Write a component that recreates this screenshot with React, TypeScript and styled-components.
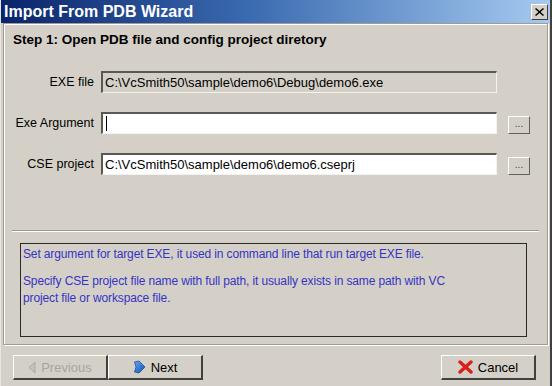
import styled, { createGlobalStyle } from "styled-components";

const GlobalStyle = createGlobalStyle`
    html, body {
        margin: 0;
        padding: 0;
        background: #d4d0c8;
    }
    body {
        font-family: "Liberation Sans", Arial, sans-serif;
    }
`;

const fields = [
    { label: "EXE file", value: "C:\\VcSmith50\\sample\\demo6\\Debug\\demo6.exe", disabled: true, browse: false, focused: false },
    { label: "Exe Argument", value: "", disabled: false, browse: true, focused: true },
    { label: "CSE project", value: "C:\\VcSmith50\\sample\\demo6\\demo6.cseprj", disabled: false, browse: true, focused: false },
];

export default function App() {
    return (
        <>
            <GlobalStyle />
            <Window>
                <TitleBar>
                    <span>Import From PDB Wizard</span>
                    <CloseButton>
                        <svg width="9" height="8" viewBox="0 0 9 8">
                            <path d="M1 0 L4.5 3 L8 0 L9 1 L5.5 4 L9 7 L8 8 L4.5 5 L1 8 L0 7 L3.5 4 L0 1 Z" fill="#000" />
                        </svg>
                    </CloseButton>
                </TitleBar>
                <Panel>
                    <StepTitle>Step 1: Open PDB file and config project diretory</StepTitle>
                    <FormGrid>
                        {fields.map((f) => (
                            <FieldRow key={f.label}>
                                <Label>{f.label}</Label>
                                <TextBox $disabled={f.disabled}>
                                    {f.focused && <Caret />}
                                    {f.value}
                                </TextBox>
                                {f.browse ? <BrowseButton>...</BrowseButton> : <span />}
                            </FieldRow>
                        ))}
                    </FormGrid>
                    <Separator />
                    <HelpBox>
                        <p>Set argument for target EXE, it used in command line that run target EXE file.</p>
                        <p>
                            Specify CSE project file name with full path, it usually exists in same path with VC
                            <br />
                            project file or workspace file.
                        </p>
                    </HelpBox>
                </Panel>
                <Footer>
                    <NavGroup>
                        <PushButton $disabled>
                            <svg width="8" height="13" viewBox="0 0 8 13">
                                <path d="M7 1 L7 12 L1 6.5 Z" fill="#c4c2bc" stroke="#aaa8a2" strokeWidth="1" />
                            </svg>
                            Previous
                        </PushButton>
                        <PushButton>
                            <svg width="13" height="14" viewBox="0 0 13 14">
                                <defs>
                                    <linearGradient id="nx" x1="0" y1="0" x2="1" y2="1">
                                        <stop offset="0" stopColor="#6aa6f0" />
                                        <stop offset="1" stopColor="#0a4fb0" />
                                    </linearGradient>
                                </defs>
                                <path d="M1.5 2 L6 1 L12 7 L6 13 L1.5 12 L3 7 Z" fill="url(#nx)" stroke="#1b4f9a" strokeWidth="0.8" />
                            </svg>
                            Next
                        </PushButton>
                    </NavGroup>
                    <PushButton>
                        <svg width="15" height="14" viewBox="0 0 15 14">
                            <path d="M2 2 L13 12 M13 2 L2 12" stroke="#d8201c" strokeWidth="3.4" strokeLinecap="round" />
                        </svg>
                        Cancel
                    </PushButton>
                </Footer>
            </Window>
        </>
    );
}

const Window = styled.div`
    width: 552px;
    height: 386px;
    box-sizing: border-box;
    display: flex;
    flex-direction: column;
    background: #d4d0c8;
    border-left: 1px solid #e8e6e0;
    border-right: 2px solid #404040;
`;

const TitleBar = styled.div`
    height: 23px;
    box-sizing: border-box;
    display: flex;
    align-items: center;
    justify-content: space-between;
    padding: 0 2px 0 3px;
    background: linear-gradient(to right, #0a246a 0%, #3a6ab0 45%, #a6caf0 100%);
    color: #fff;
    font-weight: bold;
    font-size: 16px;
`;

const CloseButton = styled.div`
    width: 17px;
    height: 16px;
    box-sizing: border-box;
    display: flex;
    align-items: center;
    justify-content: center;
    background: #d4d0c8;
    border-top: 1px solid #fff;
    border-left: 1px solid #fff;
    border-right: 1px solid #404040;
    border-bottom: 1px solid #404040;
`;

const Panel = styled.div`
    height: 322px;
    box-sizing: border-box;
    margin: 0 2px 0 2px;
    border: 1px solid #a09c94;
    box-shadow: inset 1px 1px 0 #fff, 1px 1px 0 #fff;
    display: flex;
    flex-direction: column;
    padding: 8px 0 0 0;
`;

const StepTitle = styled.div`
    font-size: 13.5px;
    font-weight: bold;
    padding-left: 9px;
    line-height: 16px;
`;

const FormGrid = styled.div`
    display: flex;
    flex-direction: column;
    gap: 19px;
    margin-top: 23px;
    padding-left: 7px;
`;

const FieldRow = styled.div`
    display: grid;
    grid-template-columns: 83px 396px 22px;
    column-gap: 7px;
    align-items: center;
    height: 22px;
    & > :nth-child(3) {
        margin-left: 4px;
    }
`;

const Label = styled.label`
    font-size: 12.5px;
    text-align: right;
    color: #000;
`;

const TextBox = styled.div<{ $disabled?: boolean }>`
    height: 22px;
    box-sizing: border-box;
    padding: 0 2px;
    display: flex;
    align-items: center;
    font-size: 13px;
    color: #000;
    background: ${(p) => (p.$disabled ? "#d4d0c8" : "#fff")};
    border-top: 2px solid #5a5852;
    border-left: 2px solid #5a5852;
    border-right: 1px solid #f4f2ee;
    border-bottom: 1px solid #f4f2ee;
`;

const Caret = styled.span`
    width: 1px;
    height: 15px;
    margin-left: 1px;
    background: #000;
`;

const BrowseButton = styled.div`
    width: 22px;
    height: 18px;
    box-sizing: border-box;
    display: flex;
    align-items: center;
    justify-content: center;
    padding-bottom: 3px;
    font-size: 10px;
    color: #404040;
    background: #d4d0c8;
    border-top: 1px solid #fff;
    border-left: 1px solid #fff;
    border-right: 1px solid #606060;
    border-bottom: 1px solid #606060;
    align-self: end;
`;

const Separator = styled.div`
    height: 0;
    margin: 55px 8px 0 8px;
    border-top: 1px solid #9c9890;
    border-bottom: 1px solid #fff;
`;

const HelpBox = styled.div`
    margin: 11px 20px 0 16px;
    height: 94px;
    box-sizing: border-box;
    border: 1px solid #2a2a2a;
    padding: 2px 2px;
    color: #3434c4;
    font-size: 12px;
    line-height: 17px;
    letter-spacing: -0.13px;
    p {
        margin: 0 0 10px 0;
    }
`;

const Footer = styled.div`
    display: flex;
    justify-content: space-between;
    align-items: center;
    padding: 10px 14px 0 12px;
`;

const NavGroup = styled.div`
    display: flex;
`;

const PushButton = styled.div<{ $disabled?: boolean }>`
    width: 95px;
    height: 25px;
    box-sizing: border-box;
    display: flex;
    align-items: center;
    justify-content: center;
    gap: 5px;
    font-size: 13px;
    color: ${(p) => (p.$disabled ? "#a8a59e" : "#000")};
    background: #d4d0c8;
    border-top: 1px solid #fff;
    border-left: 1px solid #fff;
    border-right: 2px solid #404040;
    border-bottom: 2px solid #404040;
`;
